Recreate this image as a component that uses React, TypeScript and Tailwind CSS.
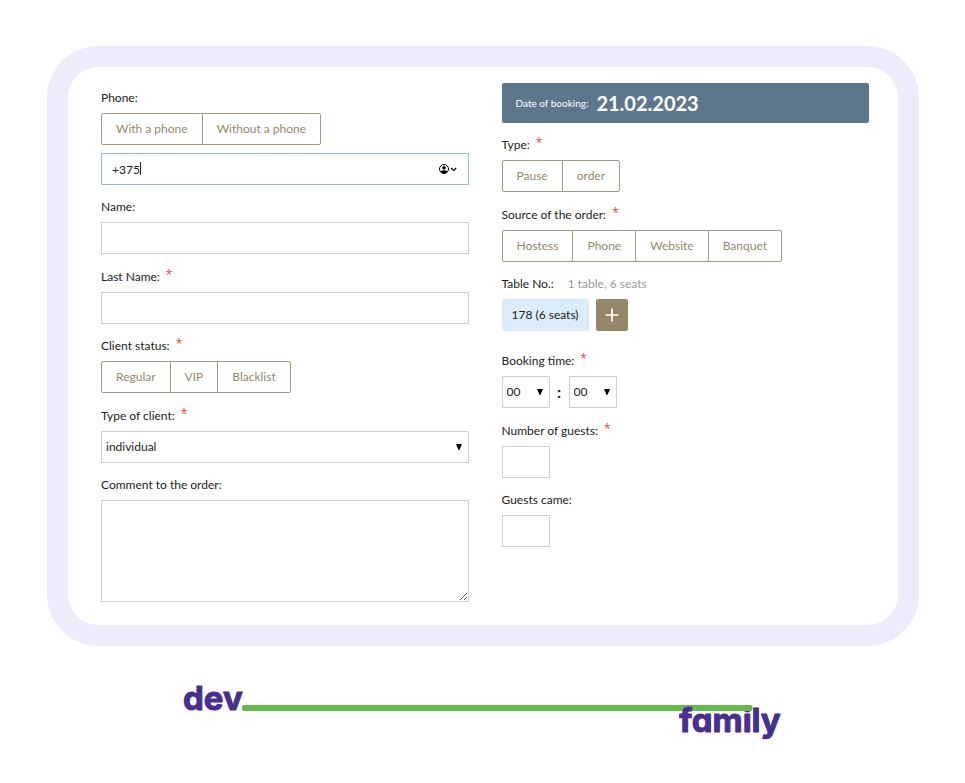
import { useState } from "react";
import type { ReactNode } from "react";

function Label({ htmlFor, required, children }: { htmlFor?: string; required?: boolean; children: ReactNode }) {
  return (
    <label htmlFor={htmlFor} className="flex h-[26px] items-start leading-[22px]">
      {children}
      {required && <span className="ml-[6px] font-['Open_Sans',sans-serif] leading-[18px] text-[#e8453c]">*</span>}
    </label>
  );
}

function ButtonGroup({ label, options }: { label: string; options: string[] }) {
  const [selected, setSelected] = useState("");

  return (
    <div role="group" aria-label={label} className="flex">
      {options.map((option) => (
        <button
          key={option}
          type="button"
          aria-pressed={selected === option}
          onClick={() => setSelected(option)}
          className="-ml-px h-8 border border-[#a79b7e] px-[14px] text-[#95896a] first:ml-0 first:rounded-l-xs last:rounded-r-xs"
        >
          {option}
        </button>
      ))}
    </div>
  );
}

function Select({ id, label, options, className }: { id: string; label?: string; options: string[]; className: string }) {
  return (
    <div className={`relative ${className}`}>
      <select
        id={id}
        aria-label={label}
        className="h-8 w-full appearance-none border border-[#cfcfcf] bg-white px-1 text-[#222] outline-none"
      >
        {options.map((option) => (
          <option key={option}>{option}</option>
        ))}
      </select>
      <svg viewBox="0 0 6 6" className="pointer-events-none absolute top-[13px] right-[7px] size-[6px]" aria-hidden="true">
        <path d="M0 0h6L3.4 6h-.8z" fill="#000" />
      </svg>
    </div>
  );
}

function AccountIcon() {
  return (
    <svg viewBox="0 0 20 12" className="h-3 w-5" aria-hidden="true">
      <circle cx="6" cy="6" r="4.5" fill="none" stroke="#000" />
      <circle cx="6" cy="4.7" r="1.8" fill="#000" />
      <path d="M2.4 8.3c1.8-1.5 5.4-1.5 7.2 0A4.4 4.4 0 0 1 6 10.6a4.4 4.4 0 0 1-3.6-2.3z" fill="#000" />
      <path d="M13 5l2.6 2.4L18.2 5" fill="none" stroke="#000" strokeWidth="1.3" />
    </svg>
  );
}

function Logo() {
  return (
    <svg viewBox="0 0 610 88" className="w-[70%]" role="img" aria-label="dev family">
      <rect x="64" y="35" width="510" height="6" rx="2" fill="#62bb46" />
      <g
        fill="#472f91"
        stroke="#472f91"
        strokeWidth="1"
        strokeLinejoin="round"
        fontSize="33"
        className="font-['Inter',sans-serif] font-bold [font-feature-settings:'cv11']"
      >
        <text x="5" y="40">dev</text>
        <text x="501" y="62">family</text>
      </g>
      {/* the line's end stands in for the dot of the i */}
      <rect x="563" y="32" width="11" height="4" fill="#fff" />
      <path d="M563 35h9a2 2 0 0 1 2 2v2a2 2 0 0 1-2 2h-9z" fill="#62bb46" />
    </svg>
  );
}

const FIELD = "block w-full border border-[#cfcfcf] bg-white outline-none";
const HOURS = ["00", "01", "02", "03", "04", "05", "06", "07", "08", "09", "10", "11"];
const MINUTES = ["00", "15", "30", "45"];

export default function App() {
  return (
    <div className="bg-white pt-[46px] pr-[46px] pb-4 pl-[47px] font-['Lato','Noto_Sans',sans-serif] text-[12px] text-[#222]">
      <main className="rounded-[52px] border-[21px] border-[#eeebfa] bg-white">
        <form className="grid grid-cols-2 gap-[33px] pt-4 pr-[29px] pb-[23px] pl-[33px]">
          {/* Client */}
          <div>
            <div className="pt-1">
              <Label htmlFor="phone">Phone:</Label>
            </div>
            <div className="mb-2">
              <ButtonGroup label="Phone" options={["With a phone", "Without a phone"]} />
            </div>
            <div className="relative mb-[11px]">
              <input
                id="phone"
                type="tel"
                defaultValue="+375"
                className="block h-8 w-full border border-[#8fbfdf] px-[10px] outline-none"
              />
              <span className="absolute top-[9px] left-[39px] h-[13px] w-px bg-[#222]" />
              <button type="button" aria-label="Choose contact" className="absolute top-[10px] right-[11px]">
                <AccountIcon />
              </button>
            </div>
            <div className="mb-3">
              <Label htmlFor="name">Name:</Label>
              <input id="name" type="text" className={`${FIELD} h-8 px-[10px]`} />
            </div>
            <div className="mb-[11px]">
              <Label htmlFor="last-name" required>Last Name:</Label>
              <input id="last-name" type="text" className={`${FIELD} h-8 px-[10px]`} />
            </div>
            <div className="mb-3">
              <Label required>Client status:</Label>
              <ButtonGroup label="Client status" options={["Regular", "VIP", "Blacklist"]} />
            </div>
            <div className="mb-[11px]">
              <Label htmlFor="client-type" required>Type of client:</Label>
              <Select id="client-type" options={["individual", "company"]} className="w-full" />
            </div>
            <Label htmlFor="comment">Comment to the order:</Label>
            <textarea id="comment" className={`${FIELD} h-[102px] p-2`} />
          </div>

          {/* Booking */}
          <div>
            <div className="mb-[11px] flex h-10 items-center gap-2 rounded-xs bg-[#5c778b] px-[14px] text-white">
              <span className="text-[10px]">Date of booking:</span>
              <span className="text-[20px] font-bold">21.02.2023</span>
            </div>
            <div className="mb-3">
              <Label required>Type:</Label>
              <ButtonGroup label="Type" options={["Pause", "order"]} />
            </div>
            <div className="mb-[11px]">
              <Label required>Source of the order:</Label>
              <ButtonGroup label="Source of the order" options={["Hostess", "Phone", "Website", "Banquet"]} />
            </div>
            <div className="mb-[19px]">
              <Label>
                Table No.:
                <span className="ml-[14px] text-[#999]">1 table, 6 seats</span>
              </Label>
              <div className="flex gap-[7px]">
                <button type="button" className="h-8 rounded-xs bg-[#daecf9] px-[10px]">178 (6 seats)</button>
                <button type="button" aria-label="Add table" className="flex size-8 items-center justify-center rounded-xs bg-[#95886a]">
                  <svg viewBox="0 0 14 14" className="size-[14px]" aria-hidden="true">
                    <path d="M7 .5v13M.5 7h13" stroke="#fff" strokeWidth="1.7" />
                  </svg>
                </button>
              </div>
            </div>
            <div className="mb-3">
              <Label htmlFor="hours" required>Booking time:</Label>
              <div className="flex items-center">
                <Select id="hours" options={HOURS} className="w-12" />
                <span className="w-[19px] text-center text-[16px] font-bold">:</span>
                <Select id="minutes" label="Minutes" options={MINUTES} className="w-12" />
              </div>
            </div>
            <div className="mb-[11px]">
              <Label htmlFor="guests" required>Number of guests:</Label>
              <input id="guests" type="text" className={`${FIELD} h-8 max-w-12 px-1`} />
            </div>
            <Label htmlFor="came">Guests came:</Label>
            <input id="came" type="text" className={`${FIELD} h-8 max-w-12 px-1`} />
          </div>
        </form>
      </main>

      <footer className="mt-6 flex justify-center">
        <Logo />
      </footer>
    </div>
  );
}
